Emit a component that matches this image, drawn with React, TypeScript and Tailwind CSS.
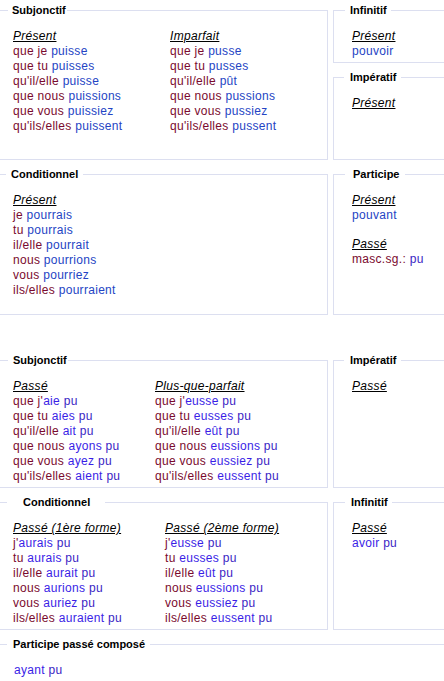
import React from "react";

type Part = [string, "p" | "v" | "a" | "u"];

const COLORS: Record<string, string> = {
  p: "text-[#7a0a2e]",
  v: "text-[#2444c4]",
  a: "text-[#3a1ee6]",
  u: "text-[#3a24c4]",
};

function Line({ parts }: { parts: Part[] }) {
  return (
    <div className="whitespace-nowrap">
      {parts.map(([t, k], i) => (
        <span key={i} className={COLORS[k]}>
          {t}
        </span>
      ))}
    </div>
  );
}

function Head({ children }: { children: React.ReactNode }) {
  return (
    <div className="whitespace-nowrap">
      <span className="italic underline text-black">{children}</span>
    </div>
  );
}

function Box({
  legend,
  legendCls,
  className,
  contentCls,
  children,
}: {
  legend: string;
  legendCls: string;
  className: string;
  contentCls: string;
  children?: React.ReactNode;
}) {
  return (
    <fieldset className={`border border-[#dcdff0] shrink-0 overflow-hidden ${className}`}>
      <legend className={`font-bold text-[11px] leading-[13px] text-black ${legendCls}`}>{legend}</legend>
      <div className={`leading-[15px] text-[12px] tracking-[0.3px] ${contentCls}`}>{children}</div>
    </fieldset>
  );
}

const subjPres: Part[][] = [
  [["que je ", "p"], ["puisse", "v"]],
  [["que tu ", "p"], ["puisses", "v"]],
  [["qu'il/elle ", "p"], ["puisse", "v"]],
  [["que nous ", "p"], ["puissions", "v"]],
  [["que vous ", "p"], ["puissiez", "v"]],
  [["qu'ils/elles ", "p"], ["puissent", "v"]],
];
const subjImp: Part[][] = [
  [["que je ", "p"], ["pusse", "v"]],
  [["que tu ", "p"], ["pusses", "v"]],
  [["qu'il/elle ", "p"], ["pût", "v"]],
  [["que nous ", "p"], ["pussions", "v"]],
  [["que vous ", "p"], ["pussiez", "v"]],
  [["qu'ils/elles ", "p"], ["pussent", "v"]],
];
const condPres: Part[][] = [
  [["je ", "p"], ["pourrais", "v"]],
  [["tu ", "p"], ["pourrais", "v"]],
  [["il/elle ", "p"], ["pourrait", "v"]],
  [["nous ", "p"], ["pourrions", "v"]],
  [["vous ", "p"], ["pourriez", "v"]],
  [["ils/elles ", "p"], ["pourraient", "v"]],
];
const subjPasse: Part[][] = [
  [["que j'", "p"], ["aie", "a"], [" pu", "u"]],
  [["que tu ", "p"], ["aies", "a"], [" pu", "u"]],
  [["qu'il/elle ", "p"], ["ait", "a"], [" pu", "u"]],
  [["que nous ", "p"], ["ayons", "a"], [" pu", "u"]],
  [["que vous ", "p"], ["ayez", "a"], [" pu", "u"]],
  [["qu'ils/elles ", "p"], ["aient", "a"], [" pu", "u"]],
];
const subjPqp: Part[][] = [
  [["que j'", "p"], ["eusse", "a"], [" pu", "u"]],
  [["que tu ", "p"], ["eusses", "a"], [" pu", "u"]],
  [["qu'il/elle ", "p"], ["eût", "a"], [" pu", "u"]],
  [["que nous ", "p"], ["eussions", "a"], [" pu", "u"]],
  [["que vous ", "p"], ["eussiez", "a"], [" pu", "u"]],
  [["qu'ils/elles ", "p"], ["eussent", "a"], [" pu", "u"]],
];
const condP1: Part[][] = [
  [["j'", "p"], ["aurais", "a"], [" pu", "u"]],
  [["tu ", "p"], ["aurais", "a"], [" pu", "u"]],
  [["il/elle ", "p"], ["aurait", "a"], [" pu", "u"]],
  [["nous ", "p"], ["aurions", "a"], [" pu", "u"]],
  [["vous ", "p"], ["auriez", "a"], [" pu", "u"]],
  [["ils/elles ", "p"], ["auraient", "a"], [" pu", "u"]],
];
const condP2: Part[][] = [
  [["j'", "p"], ["eusse", "a"], [" pu", "u"]],
  [["tu ", "p"], ["eusses", "a"], [" pu", "u"]],
  [["il/elle ", "p"], ["eût", "a"], [" pu", "u"]],
  [["nous ", "p"], ["eussions", "a"], [" pu", "u"]],
  [["vous ", "p"], ["eussiez", "a"], [" pu", "u"]],
  [["ils/elles ", "p"], ["eussent", "a"], [" pu", "u"]],
];

function Col({ head, lines, w }: { head?: string; lines: Part[][]; w: string }) {
  return (
    <div className={`shrink-0 ${w}`}>
      {head && <Head>{head}</Head>}
      {lines.map((l, i) => (
        <Line key={i} parts={l} />
      ))}
    </div>
  );
}

export default function App() {
  return (
    <div className="w-[444px] h-[681px] overflow-hidden bg-white font-['Liberation_Sans',Arial,sans-serif]">
      <div className="ml-[-5px] w-[520px] pt-[4px] flex flex-col">
        {/* Row 1 */}
        <div className="flex gap-[5px]">
          <Box
            legend="Subjonctif"
            legendCls="pl-[4px] pr-[1px]"
            className="w-[333px] h-[156px] pl-[12px] pt-[12px]"
            contentCls="flex pl-[5px]"
          >
            <Col head="Présent" lines={subjPres} w="w-[157px]" />
            <Col head="Imparfait" lines={subjImp} w="w-[150px]" />
          </Box>
          <div className="flex flex-col gap-[8px]">
            <Box
              legend="Infinitif"
              legendCls="pl-[5px] pr-[4px]"
              className="w-[150px] h-[59px] pl-[11px] pt-[12px]"
              contentCls="pl-[7px]"
            >
              <Head>Présent</Head>
              <Line parts={[["pouvoir", "v"]]} />
            </Box>
            <Box
              legend="Impératif"
              legendCls="pl-[6px] pr-[5px]"
              className="w-[150px] h-[89px] pl-[10px] pt-[12px]"
              contentCls="pl-[8px]"
            >
              <Head>Présent</Head>
            </Box>
          </div>
        </div>

        {/* Row 2 */}
        <div className="flex gap-[5px] mt-[8px]">
          <Box
            legend="Conditionnel"
            legendCls="pl-[5px] pr-[5px]"
            className="w-[333px] h-[147px] pl-[10px] pt-[12px]"
            contentCls="pl-[7px]"
          >
            <Col head="Présent" lines={condPres} w="w-[157px]" />
          </Box>
          <Box
            legend="Participe"
            legendCls="pl-[8px] pr-[6px]"
            className="w-[150px] h-[147px] pl-[11px] pt-[12px]"
            contentCls="pl-[7px]"
          >
            <Head>Présent</Head>
            <Line parts={[["pouvant", "v"]]} />
            <div className="mt-[14px]">
              <Head>Passé</Head>
              <Line parts={[["masc.sg.: ", "p"], ["pu", "u"]]} />
            </div>
          </Box>
        </div>

        {/* Row 3 */}
        <div className="flex gap-[5px] mt-[39px]">
          <Box
            legend="Subjonctif"
            legendCls="pl-[5px] pr-[1px]"
            className="w-[333px] h-[134px] pl-[12px] pt-[12px]"
            contentCls="flex pl-[5px]"
          >
            <Col head="Passé" lines={subjPasse} w="w-[142px]" />
            <Col head="Plus-que-parfait" lines={subjPqp} w="w-[160px]" />
          </Box>
          <Box
            legend="Impératif"
            legendCls="pl-[6px] pr-[5px]"
            className="w-[150px] h-[134px] pl-[10px] pt-[12px]"
            contentCls="pl-[8px]"
          >
            <Head>Passé</Head>
          </Box>
        </div>

        {/* Row 4 */}
        <div className="flex gap-[5px] mt-[8px]">
          <Box
            legend="Conditionnel"
            legendCls="pl-[16px] pr-[15px]"
            className="w-[333px] h-[134px] pl-[11px] pt-[12px]"
            contentCls="flex pl-[6px]"
          >
            <Col head="Passé (1ère forme)" lines={condP1} w="w-[152px]" />
            <Col head="Passé (2ème forme)" lines={condP2} w="w-[150px]" />
          </Box>
          <Box
            legend="Infinitif"
            legendCls="pl-[6px] pr-[4px]"
            className="w-[150px] h-[134px] pl-[11px] pt-[12px]"
            contentCls="pl-[7px]"
          >
            <Head>Passé</Head>
            <Line parts={[["avoir", "a"], [" pu", "u"]]} />
          </Box>
        </div>

        {/* Row 5 */}
        <div className="flex mt-[8px]">
          <Box
            legend="Participe passé composé"
            legendCls="pl-[6px] pr-[5px]"
            className="w-[520px] h-[80px] pl-[11px] pt-[12px]"
            contentCls="pl-[7px]"
          >
            <Line parts={[["ayant", "a"], [" pu", "u"]]} />
          </Box>
        </div>
      </div>
    </div>
  );
}
